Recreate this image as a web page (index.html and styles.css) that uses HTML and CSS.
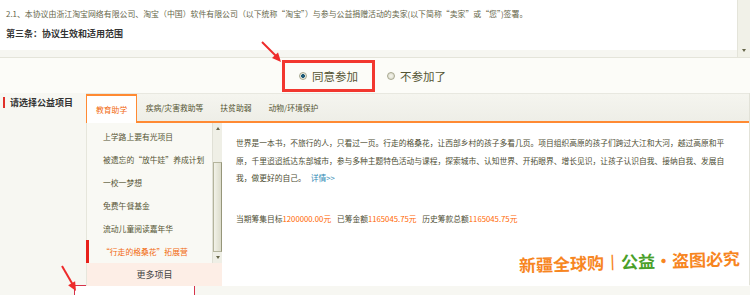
FILE: index.html
```html
<!DOCTYPE html>
<html lang="zh-CN">
<head>
    <meta charset="utf-8">
    <title>公益捐赠协议</title>
    <link rel="stylesheet" href="styles.css">
</head>
<body>
<div class="page">
    <div class="agreement">
        <div class="agreement-body">
            <p class="clause">2.1、本协议由浙江淘宝网络有限公司、淘宝（中国）软件有限公司（以下统称“淘宝”）与参与公益捐赠活动的卖家(以下简称“卖家”或“您”)签署。</p>
            <h3 class="clause-title">第三条：协议生效和适用范围</h3>
        </div>
        <div class="agreement-scroll"><span class="tri-down"></span></div>
    </div>

    <div class="consent">
        <label class="option option-picked"><span class="radio radio-on"></span>同意参加</label>
        <label class="option"><span class="radio"></span>不参加了</label>
    </div>

    <div class="projects">
        <div class="projects-label"><span>请选择公益项目</span></div>
        <div class="projects-main">
            <ul class="tabs">
                <li class="tab tab-active">教育助学</li>
                <li class="tab">疾病/灾害救助等</li>
                <li class="tab">扶贫助弱</li>
                <li class="tab">动物/环境保护</li>
            </ul>
            <div class="projects-body">
                <div class="project-list">
                    <div class="list-wrap">
                        <ul class="list">
                            <li>上学路上要有光项目</li>
                            <li>被遗忘的“放牛娃”养成计划</li>
                            <li>一校一梦想</li>
                            <li>免费午餐基金</li>
                            <li>流动儿童阅读嘉年华</li>
                            <li class="on">“行走的格桑花”拓展营</li>
                        </ul>
                        <div class="scrollbar">
                            <span class="sb-btn"><span class="tri-up"></span></span>
                            <span class="sb-space"></span>
                            <span class="sb-thumb"></span>
                            <span class="sb-btn"><span class="tri-down"></span></span>
                        </div>
                    </div>
                    <div class="more">更多项目</div>
                </div>
                <div class="project-detail">
                    <div class="detail-text">
                        <p class="detail-lines">世界是一本书，不旅行的人，只看过一页。行走的格桑花，让西部乡村的孩子多看几页。项目组织高原的孩子们跨过大江和大河，越过高原和平原，千里迢迢抵达东部城市，参与多种主题特色活动与课程，探索城市、认知世界、开拓眼界、增长见识，让孩子认识自我、接纳自我、发展自</p>
                        <p class="detail-end"><span>我，做更好的自己。</span><a class="more-link">详情&gt;&gt;</a></p>
                    </div>
                    <p class="funds">
                        <span>当期筹集目标<em>1200000.00元</em></span>
                        <span>已筹金额<em>1165045.75元</em></span>
                        <span>历史筹款总额<em>1165045.75元</em></span>
                    </p>
                </div>
            </div>
        </div>
    </div>

    <div class="next-box"></div>

    <div class="watermark">新疆全球购<span class="wm-bar">丨</span><span class="wm-green">公益</span><span class="wm-dot">·</span>盗图必究</div>

    <svg class="marks" width="750" height="295" viewBox="0 0 750 295">
        <line x1="262" y1="42" x2="277" y2="57" stroke="#ee2b2b" stroke-width="2"/>
        <polygon points="281,62 272,58 278,52.6" fill="#ee2b2b"/>
        <line x1="62" y1="266" x2="73" y2="285" stroke="#ee2b2b" stroke-width="2"/>
        <polygon points="76,291 68.1,285.2 75.1,281.2" fill="#ee2b2b"/>
    </svg>
</div>
</body>
</html>
```

FILE: styles.css
```css
body {
    margin: 0;
    background-color: #f7f7f2;
    color: #4d4d33;
    font-family: "Noto Sans CJK SC", "Liberation Sans", sans-serif;
}
.page {
    position: relative;
    width: 750px;
    height: 295px;
    overflow: hidden;
}

/* agreement text box */
.agreement {
    display: flex;
    height: 57px;
    border-bottom: 1px solid #e4e4da;
    background-color: #fff;
}
.agreement-body {
    flex: 1;
    padding: 8px 6px 0;
    background: linear-gradient(#fff 50px, #f6f6f1 50px);
}
.clause {
    margin: 0;
    font-size: 7.9px;
    line-height: 11px;
    color: #66664a;
}
.clause-title {
    margin: 9px 0 0;
    font-size: 9px;
    line-height: 12px;
    font-weight: bold;
    color: #333;
}
.agreement-scroll {
    width: 12px;
    display: flex;
    flex-direction: column;
    justify-content: flex-end;
    align-items: center;
    padding-bottom: 5px;
    background-color: #f1f1e8;
    border-left: 1px solid #e4e4da;
}
.tri-down,
.tri-up {
    display: block;
    width: 0;
    height: 0;
    border-left: 2.5px solid transparent;
    border-right: 2.5px solid transparent;
}
.tri-down {
    border-top: 3px solid #66664a;
}
.tri-up {
    border-bottom: 3px solid #66664a;
}

/* consent radios */
.consent {
    display: flex;
    align-items: center;
    height: 35px;
    padding-left: 282px;
    background-color: #fcfcf8;
    font-size: 11.5px;
    color: #555533;
}
.option {
    display: flex;
    align-items: center;
    gap: 5px;
}
.option-picked {
    width: 93px;
    height: 32px;
    box-sizing: border-box;
    padding-left: 14px;
    border: 3px solid #f2372f;
}
.option + .option {
    margin-left: 12px;
}
.radio {
    width: 8px;
    height: 8px;
    box-sizing: border-box;
    border-radius: 50%;
    border: 1px solid #a8a890;
    background: radial-gradient(circle, #f6f6ee, #d6d6c6);
}
.radio-on {
    background: radial-gradient(circle, #1e5a78 0, #1e5a78 1.6px, #e8e8dc 2.2px);
}

/* projects */
.projects {
    display: flex;
    height: 192px;
}
.projects-label {
    width: 86px;
    padding: 4px 0 0 3px;
    box-sizing: border-box;
}
.projects-label span {
    display: block;
    padding-left: 5px;
    border-left: 2px solid #e0302a;
    font-size: 9px;
    line-height: 11px;
    font-weight: bold;
    color: #333;
}
.projects-main {
    flex: 1;
    display: flex;
    flex-direction: column;
    border-right: 1px solid #e2e2d8;
}
.tabs {
    display: flex;
    height: 30px;
    box-sizing: border-box;
    margin: 0;
    padding: 0;
    list-style: none;
    background: linear-gradient(#f5f5ef, #eeeee7);
    border-top: 1px solid #e8e8e0;
    border-bottom: 2px solid #ff8a33;
}
.tab {
    padding: 0 8.5px;
    font-size: 7.8px;
    line-height: 27px;
    color: #555533;
}
.tab-active {
    margin-bottom: -2px;
    padding: 0 9px;
    background-color: #fff;
    color: #f26a10;
    border: 1px solid #ff8a33;
    border-top-width: 2px;
    border-bottom: none;
    line-height: 28px;
}
.projects-body {
    flex: 1;
    display: flex;
}
.project-list {
    width: 136px;
    display: flex;
    flex-direction: column;
    background-color: #f9f9f4;
    border-left: 1px solid #e6e6dc;
    box-sizing: border-box;
}
.list-wrap {
    flex: 1;
    display: flex;
}
.list {
    flex: 1;
    margin: 0;
    padding: 2px 0 0;
    list-style: none;
}
.list li {
    height: 23px;
    line-height: 23px;
    padding-left: 16px;
    font-size: 7.8px;
    color: #555533;
    white-space: nowrap;
}
.list li.on {
    padding-left: 13px;
    margin-left: -1px;
    border-left: 3px solid #e8201a;
    color: #f26a10;
}
.scrollbar {
    width: 9px;
    display: flex;
    flex-direction: column;
    background-color: #efefe6;
    border-left: 1px solid #e0e0d6;
}
.sb-btn {
    height: 10px;
    display: flex;
    align-items: center;
    justify-content: center;
}
.sb-space {
    height: 29px;
}
.sb-thumb {
    height: 90px;
    box-sizing: border-box;
    border: 1px solid #b4b49c;
    border-right-color: #96967a;
    background: linear-gradient(90deg, #f2f2e8, #dcdccb);
}
.more {
    height: 23px;
    line-height: 23px;
    text-align: center;
    background-color: #fdeee6;
    font-size: 9px;
    color: #444;
}
.project-detail {
    flex: 1;
    padding: 11px 14px 0;
    background-color: #fff;
}
.detail-text {
    max-width: 490px;
    font-size: 7.75px;
    line-height: 17.5px;
    color: #4d4d33;
}
.detail-lines,
.detail-end {
    margin: 0;
}
.more-link {
    margin-left: 5px;
    color: #2e8ab5;
}
.funds {
    margin: 26px 0 0;
    font-size: 7.75px;
    line-height: 11px;
    color: #4d4d33;
}
.funds span + span {
    margin-left: 4px;
}
.funds em {
    font-style: normal;
    color: #ff6600;
}

.next-box {
    width: 119px;
    height: 14px;
    margin-left: 74px;
    border: 1.5px solid #d6334a;
    border-bottom: none;
    background-color: #fff;
}

.watermark {
    position: absolute;
    left: 519px;
    top: 254px;
    font-size: 17px;
    line-height: 22px;
    font-weight: bold;
    color: #f7861f;
    white-space: nowrap;
    transform: rotate(-1.8deg);
    transform-origin: left center;
}
.wm-bar {
    font-weight: normal;
}
.wm-green {
    color: #4aa02a;
}
.marks {
    position: absolute;
    left: 0;
    top: 0;
    pointer-events: none;
}
```
